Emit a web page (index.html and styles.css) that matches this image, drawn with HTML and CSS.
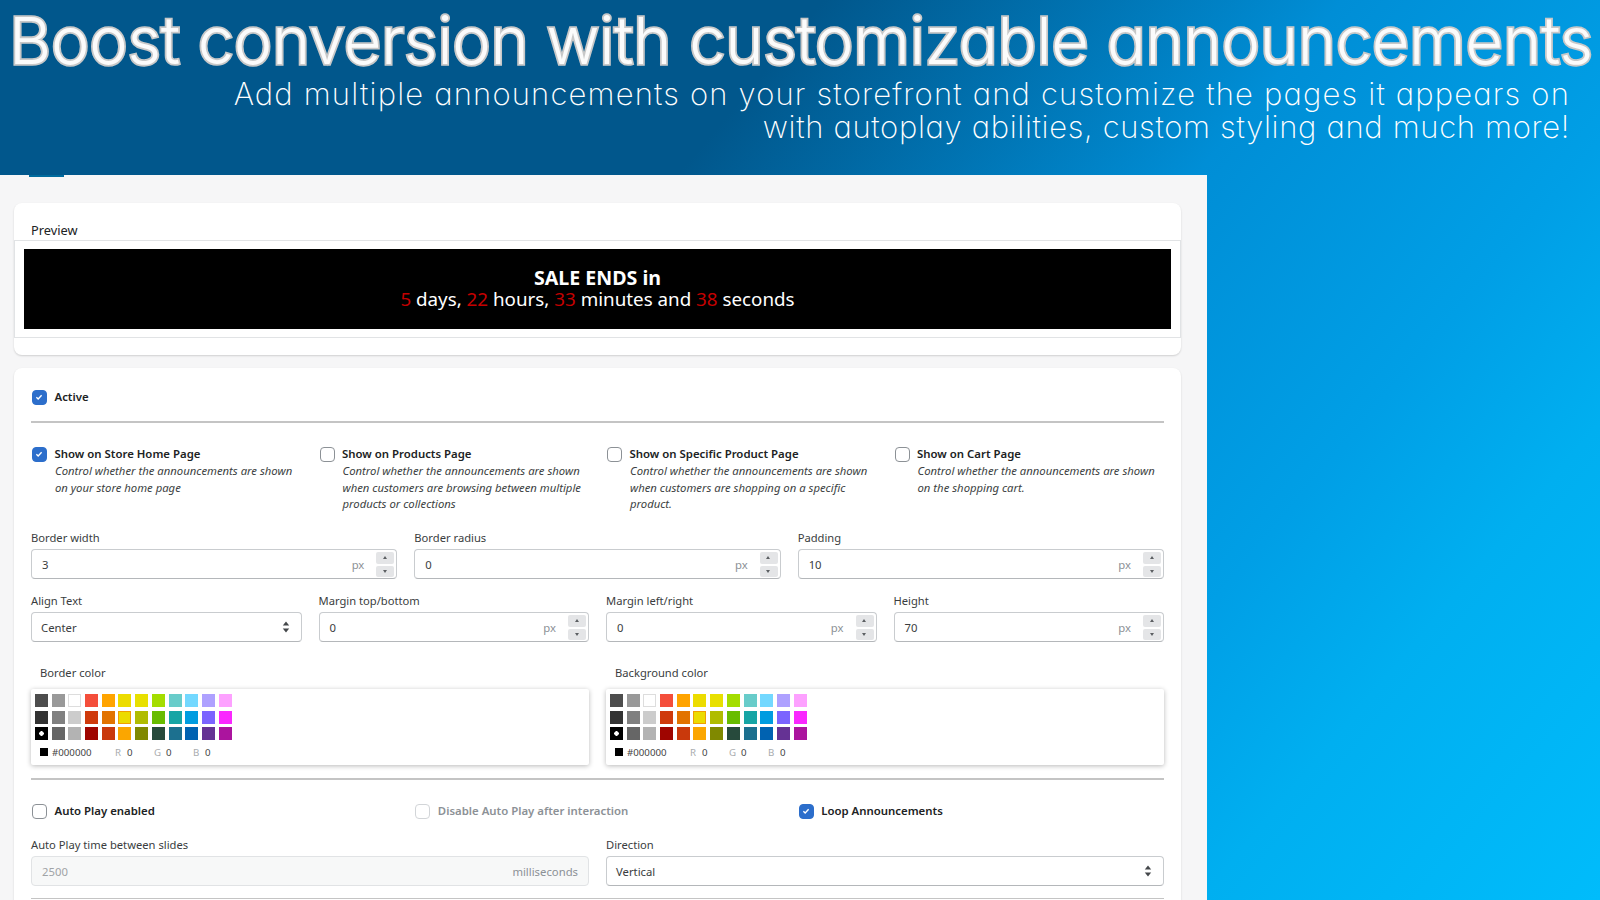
FILE: index.html
```html
<!DOCTYPE html>
<html lang="en">
<head>
<meta charset="utf-8">
<title>Announcements</title>
<link rel="stylesheet" href="styles.css">
</head>
<body>
<header class="hero">
  <h1 class="hero-title">Boost conversion with customizable announcements</h1>
  <p class="hero-sub">Add multiple announcements on your storefront and customize the pages it appears on<br><span class="sub-second">with autoplay abilities, custom styling and much more!</span></p>
</header>
<main class="panel">
  <span class="tab-mark"></span>
  <section class="card preview-card">
    <div class="preview-title">Preview</div>
    <div class="preview-box">
      <div class="banner">
        <strong class="banner-head">SALE ENDS in</strong>
        <div><span class="red">5</span> days, <span class="red">22</span> hours, <span class="red">33</span> minutes and <span class="red">38</span> seconds</div>
      </div>
    </div>
  </section>
  <section class="card form-card">
    <label class="check check-active"><span class="box on"><svg viewBox="0 0 16 16"><path d="M4.5 8.2l2.4 2.4 4.6-5"/></svg></span><b>Active</b></label>
    <hr class="rule rule-a">
    <div class="cols4 pages">
      <div class="page-opt"><label class="check"><span class="box on"><svg viewBox="0 0 16 16"><path d="M4.5 8.2l2.4 2.4 4.6-5"/></svg></span><b>Show on Store Home Page</b></label><p>Control whether the announcements are shown on your store home page</p></div>
      <div class="page-opt"><label class="check"><span class="box"></span><b>Show on Products Page</b></label><p>Control whether the announcements are shown when customers are browsing between multiple products or collections</p></div>
      <div class="page-opt"><label class="check"><span class="box"></span><b>Show on Specific Product Page</b></label><p>Control whether the announcements are shown when customers are shopping on a specific product.</p></div>
      <div class="page-opt"><label class="check"><span class="box"></span><b>Show on Cart Page</b></label><p>Control whether the announcements are shown on the shopping cart.</p></div>
    </div>
    <div class="cols3 row-one">
      <div class="field"><div class="lbl">Border width</div><div class="input"><span class="val">3</span><span class="unit">px</span><span class="spin"><i class="up"></i><i class="down"></i></span></div></div>
      <div class="field"><div class="lbl">Border radius</div><div class="input"><span class="val">0</span><span class="unit">px</span><span class="spin"><i class="up"></i><i class="down"></i></span></div></div>
      <div class="field"><div class="lbl">Padding</div><div class="input"><span class="val">10</span><span class="unit">px</span><span class="spin"><i class="up"></i><i class="down"></i></span></div></div>
    </div>
    <div class="cols4 row-two">
      <div class="field"><div class="lbl">Align Text</div><div class="input select"><span class="val">Center</span><svg class="updown" viewBox="0 0 8 12"><path d="M4 0.5L7.2 4.6H0.8zM4 11.5L0.8 7.4H7.2z"/></svg></div></div>
      <div class="field"><div class="lbl">Margin top/bottom</div><div class="input"><span class="val">0</span><span class="unit">px</span><span class="spin"><i class="up"></i><i class="down"></i></span></div></div>
      <div class="field"><div class="lbl">Margin left/right</div><div class="input"><span class="val">0</span><span class="unit">px</span><span class="spin"><i class="up"></i><i class="down"></i></span></div></div>
      <div class="field"><div class="lbl">Height</div><div class="input"><span class="val">70</span><span class="unit">px</span><span class="spin"><i class="up"></i><i class="down"></i></span></div></div>
    </div>
    <div class="cols2 colors">
      <div>
        <div class="lbl lbl-color">Border color</div>
        <div class="picker">
          <div class="swatches">
            <i class="c1"></i><i class="c2"></i><i class="c3"></i><i class="c4"></i><i class="c5"></i><i class="c6"></i><i class="c7"></i><i class="c8"></i><i class="c9"></i><i class="c10"></i><i class="c11"></i><i class="c12"></i>
            <i class="c13"></i><i class="c14"></i><i class="c15"></i><i class="c16"></i><i class="c17"></i><i class="c18"></i><i class="c19"></i><i class="c20"></i><i class="c21"></i><i class="c22"></i><i class="c23"></i><i class="c24"></i>
            <i class="c25"></i><i class="c26"></i><i class="c27"></i><i class="c28"></i><i class="c29"></i><i class="c30"></i><i class="c31"></i><i class="c32"></i><i class="c33"></i><i class="c34"></i><i class="c35"></i><i class="c36"></i>
          </div>
          <div class="hexrow"><i class="hexdot"></i><span class="hex">#000000</span><span class="ch ch-r">R</span><span class="chv">0</span><span class="ch ch-g">G</span><span class="chv">0</span><span class="ch ch-b">B</span><span class="chv">0</span></div>
        </div>
      </div>
      <div>
        <div class="lbl lbl-color">Background color</div>
        <div class="picker">
          <div class="swatches">
            <i class="c1"></i><i class="c2"></i><i class="c3"></i><i class="c4"></i><i class="c5"></i><i class="c6"></i><i class="c7"></i><i class="c8"></i><i class="c9"></i><i class="c10"></i><i class="c11"></i><i class="c12"></i>
            <i class="c13"></i><i class="c14"></i><i class="c15"></i><i class="c16"></i><i class="c17"></i><i class="c18"></i><i class="c19"></i><i class="c20"></i><i class="c21"></i><i class="c22"></i><i class="c23"></i><i class="c24"></i>
            <i class="c25"></i><i class="c26"></i><i class="c27"></i><i class="c28"></i><i class="c29"></i><i class="c30"></i><i class="c31"></i><i class="c32"></i><i class="c33"></i><i class="c34"></i><i class="c35"></i><i class="c36"></i>
          </div>
          <div class="hexrow"><i class="hexdot"></i><span class="hex">#000000</span><span class="ch ch-r">R</span><span class="chv">0</span><span class="ch ch-g">G</span><span class="chv">0</span><span class="ch ch-b">B</span><span class="chv">0</span></div>
        </div>
      </div>
    </div>
    <hr class="rule rule-b">
    <div class="cols3 auto-row">
      <label class="check"><span class="box"></span><b>Auto Play enabled</b></label>
      <label class="check disabled"><span class="box"></span><b>Disable Auto Play after interaction</b></label>
      <label class="check"><span class="box on"><svg viewBox="0 0 16 16"><path d="M4.5 8.2l2.4 2.4 4.6-5"/></svg></span><b>Loop Announcements</b></label>
    </div>
    <div class="cols2 row-three">
      <div class="field"><div class="lbl">Auto Play time between slides</div><div class="input is-disabled"><span class="val">2500</span><span class="unit unit-ms">milliseconds</span></div></div>
      <div class="field"><div class="lbl">Direction</div><div class="input select"><span class="val">Vertical</span><svg class="updown" viewBox="0 0 8 12"><path d="M4 0.5L7.2 4.6H0.8zM4 11.5L0.8 7.4H7.2z"/></svg></div></div>
    </div>
    <hr class="rule rule-c">
  </section>
</main>
</body>
</html>
```
FILE: styles.css
```css
* { box-sizing: border-box; }
html, body { margin: 0; padding: 0; }
body {
  width: 1600px;
  height: 900px;
  overflow: hidden;
  font-family: "Noto Sans", "Open Sans", sans-serif;
  font-size: 12px;
  color: #202223;
  background: linear-gradient(130deg, #01578c 0%, #01578c 35%, #008ed6 57%, #009fe6 73%, #00aff0 83%, #00bcfb 100%);
}
.hero { height: 175px; overflow: hidden; }
.hero-title {
  margin: 0;
  padding: 4px 0 0 9px;
  height: 74px;
  font-family: Inter, "Liberation Sans", sans-serif;
  font-feature-settings: "cv11" 1;
  font-weight: 300;
  font-size: 65px;
  line-height: 74px;
  letter-spacing: -0.28px;
  white-space: nowrap;
  color: #fbfbfb;
  -webkit-text-stroke: 3.6px #c8c8c8;
  paint-order: stroke fill;
}
.hero-sub {
  margin: 0;
  padding: 3px 30px 0 0;
  text-align: right;
  font-family: Inter, "Liberation Sans", sans-serif;
  font-feature-settings: "cv11" 1;
  font-weight: 200;
  font-size: 31px;
  line-height: 33px;
  letter-spacing: 1.17px;
  color: #fff;
  white-space: nowrap;
}
.sub-second { letter-spacing: 0.67px; }
.panel {
  position: relative;
  width: 1207px;
  height: 725px;
  padding: 28px 26px 0 14px;
  background: #f6f6f7;
  overflow: hidden;
}
.tab-mark {
  position: absolute;
  left: 29px;
  top: 0;
  width: 35px;
  height: 2px;
  background: #006b9e;
}
.card {
  background: #fff;
  border-radius: 8px;
  box-shadow: 0 1px 2px rgba(0, 0, 0, .16);
}
.preview-card { height: 152px; margin-bottom: 13px; }
.preview-title {
  height: 37px;
  padding: 19px 0 0 17px;
  line-height: 17px;
  font-size: 12.8px;
}
.preview-box {
  height: 98px;
  padding: 8px 9px;
  border: 1px solid #e1e3e5;
}
.banner {
  height: 80px;
  background: #000;
  color: #fff;
  text-align: center;
  font-size: 18.8px;
  line-height: 21.5px;
  padding-top: 18px;
}
.banner-head { display: block; font-weight: 700; font-size: 19.6px; }
.red { color: #c40000; }
.form-card { height: 560px; padding: 21px 17px 0; }
.check { display: flex; align-items: center; height: 16px; }
.check b { font-weight: 600; font-size: 11.4px; line-height: 16px; margin-left: 7.5px; }
.box {
  flex: none;
  width: 15px;
  height: 15px;
  margin-left: 1px;
  border: 1.5px solid #8c9196;
  border-radius: 4px;
  background: #fff;
}
.box.on { background: #2c6ecb; border-color: #2c6ecb; }
.box svg { display: block; width: 12px; height: 12px; fill: none; stroke: #fff; stroke-width: 1.8; }
.disabled .box { border-color: #d2d5d8; }
.disabled b { color: #8c9196; }
.rule { margin: 0; border: 0; height: 2px; background: #c4c4c4; }
.rule-a { margin-top: 16px; }
.rule-b { margin-top: 13px; }
.rule-c { margin-top: 12px; height: 1px; }
.cols4 { display: grid; grid-template-columns: repeat(4, 1fr); column-gap: 17px; }
.cols3 { display: grid; grid-template-columns: repeat(3, 1fr); column-gap: 17px; }
.cols2 { display: grid; grid-template-columns: repeat(2, 1fr); column-gap: 17px; }
.pages { margin-top: 23px; height: 81px; }
.page-opt p {
  margin: 1px 0 0 24px;
  font-style: italic;
  font-size: 11.3px;
  line-height: 16.7px;
  color: #3c3f42;
}
.lbl { height: 20px; line-height: 17px; font-size: 11.2px; color: #3a3d40; }
.row-one { margin-top: 2px; }
.row-two { margin-top: 13px; }
.input {
  position: relative;
  display: flex;
  align-items: center;
  height: 30px;
  padding: 0 10px;
  background: #fff;
  border: 1px solid #c9cccf;
  border-bottom-color: #b4b7ba;
  border-radius: 4px;
  font-size: 11.3px;
  color: #3a3d40;
}
.val { flex: 1; }
.unit { color: #8c9196; margin-right: 22px; }
.unit-ms { margin-right: 0; }
.spin {
  position: absolute;
  right: 2px;
  top: 2px;
  display: flex;
  flex-direction: column;
  gap: 2px;
  width: 18px;
}
.spin i {
  display: block;
  position: relative;
  height: 11.5px;
  background: #e4e5e7;
  border-radius: 2px;
}
.spin i::after {
  content: "";
  position: absolute;
  left: 6.5px;
  top: 4px;
  border-left: 2.5px solid transparent;
  border-right: 2.5px solid transparent;
}
.spin .up::after { border-bottom: 3px solid #5c5f62; }
.spin .down::after { border-top: 3px solid #5c5f62; }
.select { padding-left: 9px; }
.updown { width: 8px; height: 12px; margin-right: 1px; fill: #44474a; }
.is-disabled { background: #f7f8f8; border-color: #e1e3e5; color: #a0a3a6; }
.colors { margin-top: 22px; }
.lbl-color { padding-left: 9px; height: 25px; }
.picker {
  height: 76px;
  padding: 5px 4px 0;
  background: #fff;
  border-radius: 2px;
  box-shadow: 0 1px 5px rgba(0, 0, 0, .28);
}
.swatches { display: grid; grid-template-columns: repeat(12, 13px); grid-auto-rows: 13px; gap: 3.7px; }
.swatches i { display: block; }
.hexrow { display: flex; align-items: center; margin-top: 4px; height: 16px; font-size: 9.7px; color: #444; padding-left: 5px; }
.hexdot { width: 8px; height: 8px; background: #000; margin-right: 4px; }
.hex { width: 63px; }
.ch { color: #a8abae; width: 12px; }
.chv { width: 27px; }
.auto-row { margin-top: 23px; }
.row-three { margin-top: 17px; }
.c1 { background: #4d4d4d; } .c2 { background: #999; } .c3 { background: #fff; border: 1px solid #ddd; }
.c4 { background: #f44e3b; } .c5 { background: #ffa400; } .c6 { background: #ecdc00; }
.c7 { background: #e8e000; } .c8 { background: #a4dd00; } .c9 { background: #68ccca; }
.c10 { background: #73d8ff; } .c11 { background: #aea1ff; } .c12 { background: #fda1ff; }
.c13 { background: #333; } .c14 { background: #808080; } .c15 { background: #ccc; }
.c16 { background: #cf3a0c; } .c17 { background: #e27300; } .c18 { background: #ecdc00; border: 1px solid #f0a000; }
.c19 { background: #b0bc00; } .c20 { background: #68bc00; } .c21 { background: #16a5a5; }
.c22 { background: #009ce0; } .c23 { background: #7b64ff; } .c24 { background: #fa28ff; }
.c25 { background: radial-gradient(circle, #fff 0 2px, #000 2.5px); } .c26 { background: #666; } .c27 { background: #b3b3b3; }
.c28 { background: #9f0500; } .c29 { background: #c9390c; } .c30 { background: #fba600; }
.c31 { background: #808900; } .c32 { background: #274a3c; } .c33 { background: #1c708f; }
.c34 { background: #0062b1; } .c35 { background: #653294; } .c36 { background: #ab149e; }
```
